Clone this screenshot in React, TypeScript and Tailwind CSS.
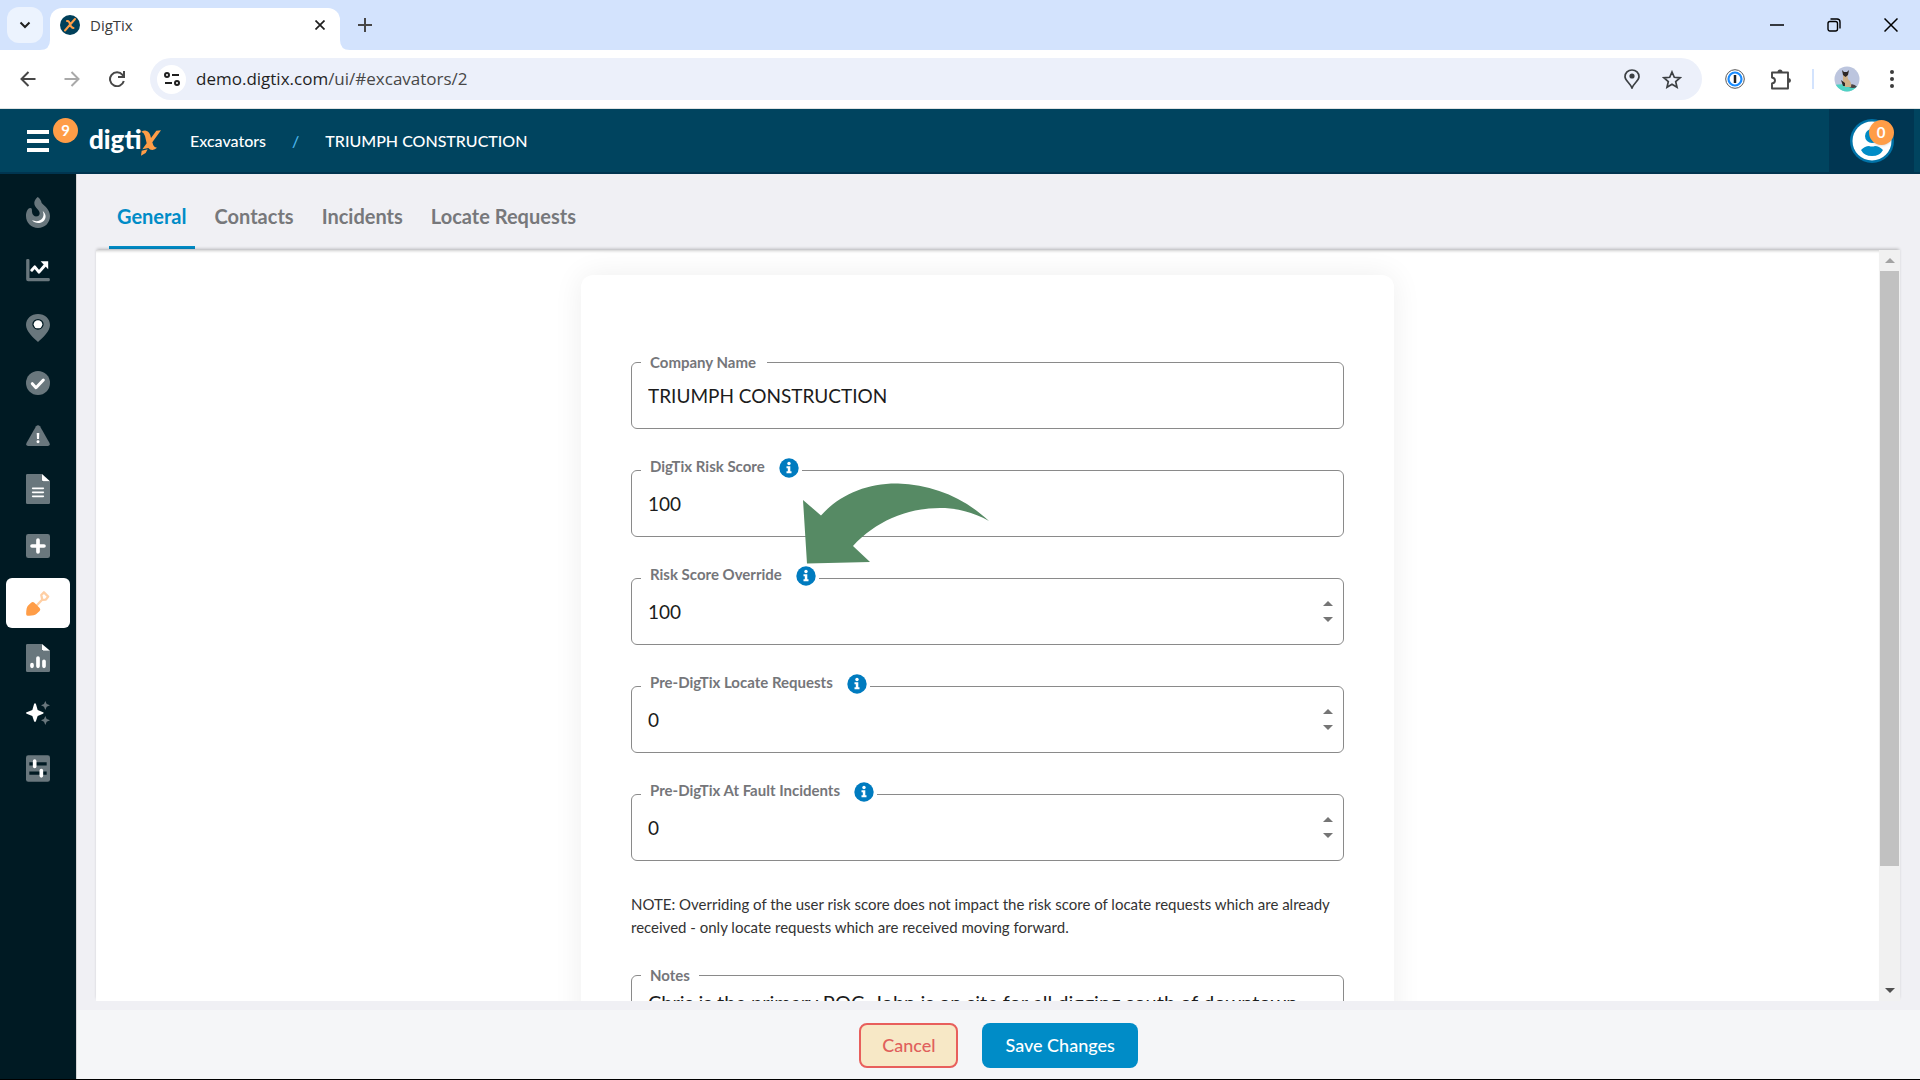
import type { ReactNode } from 'react';

const icons: Record<string, ReactNode> = {
  fire: (
    <svg viewBox="0 0 72 93" className="h-[31px] w-6">
      <path fill="#69777d" d="M35 0C41 4 45 10 47 18C56 27 72 38 72 57C72 78 56 93 36 93C16 93 0 77 0 57C0 46 4 34 13 33C18 33 18 38 18 45C19 55 27 60 34 58C43 55 43 46 36 38C28 30 24 24 25 16C26 9 31 4 35 0Z" />
      <path fill="#fff" d="M50 42C60 50 62 62 54 71C44 81 27 80 18 70C32 75 44 72 50 62C54 55 53 49 50 42Z" />
    </svg>
  ),
  trend: (
    <svg viewBox="0 0 72 70" className="h-[23px] w-6">
      <path fill="#69777d" d="M0 4Q0 0 4 0H6Q10 0 10 4V58H68Q72 58 72 62V64Q72 68 68 68H6Q0 68 0 62Z" />
      <path fill="none" stroke="#fff" strokeWidth="9" strokeLinejoin="round" strokeLinecap="round" d="M17 34L26 24L39 40L58 18" />
      <path fill="#fff" d="M44 7H67V31Z" />
    </svg>
  ),
  pin: (
    <svg viewBox="0 0 72 84" className="h-7 w-6">
      <path fill="#69777d" fillRule="evenodd" d="M36 0C56 0 72 14 72 33C72 51 50 72 36 84C22 72 0 51 0 33C0 14 16 0 36 0ZM36 15A17 16 0 1 0 36 47A17 16 0 1 0 36 15Z" />
      <ellipse cx="36" cy="31" rx="13" ry="12" fill="#fff" />
    </svg>
  ),
  check: (
    <svg viewBox="0 0 72 72" className="size-6">
      <circle cx="36" cy="36" r="36" fill="#69777d" />
      <path fill="none" stroke="#fff" strokeWidth="9" strokeLinecap="round" strokeLinejoin="round" d="M19 38L30 50L52 27" />
    </svg>
  ),
  warning: (
    <svg viewBox="0 0 72 64" className="h-[21px] w-6">
      <path fill="#69777d" d="M30 4Q36 -3 42 4L71 55Q74 63 66 64H6Q-2 63 1 55Z" />
      <path fill="#fff" d="M32 24H40L39 43H33Z" />
      <circle cx="36" cy="51" r="4.500" fill="#fff" />
    </svg>
  ),
  document: (
    <svg viewBox="0 0 72 90" className="h-[30px] w-6">
      <path fill="#69777d" d="M0 4Q0 0 4 0H48V22H72V86Q72 90 68 90H4Q0 90 0 86Z" />
      <path fill="#fff" d="M48 0L72 22H52Q48 22 48 18Z" />
      <path stroke="#fff" strokeWidth="5" strokeLinecap="round" d="M20 43H52M20 55H52M20 67H52" />
    </svg>
  ),
  plus: (
    <svg viewBox="0 0 72 72" className="size-6">
      <rect width="72" height="72" rx="7" fill="#69777d" />
      <path stroke="#fff" strokeWidth="11" strokeLinecap="round" d="M36 18V54M18 36H54" />
    </svg>
  ),
  shovel: (
    <svg viewBox="0 0 72 76" className="h-[25px] w-6">
      <path fill="none" stroke="#ffcfa4" strokeWidth="7" strokeLinejoin="round" strokeLinecap="round" d="M32 44L47 28M46 12L54 4L67 17L60 26L49 27Z" />
      <path fill="#ff9d47" d="M15 36Q20 31 25 36L41 52Q45 57 41 61L31 70Q24 76 4 75Q0 75 0 70Q0 50 6 44Z" />
    </svg>
  ),
  report: (
    <svg viewBox="0 0 72 84" className="h-7 w-6">
      <path fill="#69777d" d="M0 4Q0 0 4 0H48V20H72V80Q72 84 68 84H4Q0 84 0 80Z" />
      <path fill="#fff" d="M48 0L72 20H52Q48 20 48 16Z" />
      <path stroke="#fff" strokeWidth="11" strokeLinecap="round" d="M18 62V67M36 42V67M54 52V67" />
    </svg>
  ),
  sparkles: (
    <svg viewBox="0 0 72 72" className="size-6">
      <path fill="#fff" d="M27 7Q29 7 30 10L35 27L51 34Q55 36 51 38L35 45L30 60Q27 66 24 60L19 45L2 38Q-2 36 2 34L19 27L24 10Q25 7 27 7Z" />
      <path fill="#69777d" d="M58 0L62 9L72 13L62 17L58 27L54 17L45 13L54 9ZM58 45L62 54L72 58L62 62L58 72L54 62L45 58L54 54Z" />
    </svg>
  ),
  sliders: (
    <svg viewBox="0 0 72 80" className="h-[27px] w-6">
      <rect width="72" height="80" rx="7" fill="#69777d" />
      <path stroke="#001a23" strokeWidth="10" d="M10 26H62M10 54H62" />
      <path stroke="#fff" strokeWidth="11" strokeLinecap="round" d="M26 18V34M46 46V62" />
    </svg>
  ),
};

const sideItems = [
  { name: 'Hot Tickets', icon: 'fire', cell: 'h-15' },
  { name: 'Trends', icon: 'trend', cell: 'h-14' },
  { name: 'Locations', icon: 'pin', cell: 'h-15' },
  { name: 'Completed', icon: 'check', cell: 'h-[50px]' },
  { name: 'Alerts', icon: 'warning', cell: 'h-[54px]' },
  { name: 'Documents', icon: 'document', cell: 'h-[54px]' },
  { name: 'Incidents', icon: 'plus', cell: 'h-15' },
  { name: 'Excavators', icon: 'shovel', cell: 'mt-[2px] h-[50px] rounded-md bg-white' },
  { name: 'Reports', icon: 'report', cell: 'h-15' },
  { name: 'Assistant', icon: 'sparkles', cell: 'h-[50px]' },
  { name: 'Settings', icon: 'sliders', cell: 'h-15' },
];

const tabs = ['General', 'Contacts', 'Incidents', 'Locate Requests'];

const fields = [
  { id: 'company', label: 'Company Name', value: 'TRIUMPH CONSTRUCTION', info: false, number: false },
  { id: 'risk', label: 'DigTix Risk Score', value: '100', info: true, number: false },
  { id: 'override', label: 'Risk Score Override', value: '100', info: true, number: true },
  { id: 'locates', label: 'Pre-DigTix Locate Requests', value: '0', info: true, number: true },
  { id: 'faults', label: 'Pre-DigTix At Fault Incidents', value: '0', info: true, number: true },
];

function Browser() {
  return (
    <div className="shrink-0 bg-white font-['Open_Sans',sans-serif]">
      {/* Tab strip */}
      <div className="flex h-[50px] items-center bg-[#d3e3fd] pl-[7px]">
        <button aria-label="Search tabs" className="flex size-9 items-center justify-center rounded-xl bg-[#ecf3fe]">
          <svg viewBox="0 0 12 12" className="size-3" fill="none" stroke="#1f1f1f" strokeWidth="2">
            <path d="M1.500 3.500L6 8L10.500 3.500" />
          </svg>
        </button>
        <div className="relative ml-[7px] mt-2 flex h-[42px] w-[290px] items-center rounded-t-xl bg-white pb-2 pl-[10px] pr-3">
          <svg viewBox="0 0 10 10" className="absolute -left-[10px] bottom-0 size-[10px]"><path fill="#fff" d="M10 0V10H0Q10 10 10 0Z" /></svg>
          <svg viewBox="0 0 10 10" className="absolute -right-[10px] bottom-0 size-[10px]"><path fill="#fff" d="M0 0V10H10Q0 10 0 0Z" /></svg>
          <svg viewBox="0 0 20 20" className="size-5">
            <circle cx="10" cy="10" r="10" fill="#00405a" />
            <path stroke="#ff9d47" strokeWidth="2" strokeLinecap="round" fill="none" d="M5 15.500L15 4M7 6Q9 5.500 10 9Q11 13 13.500 13" />
          </svg>
          <span className="ml-[10px] flex-1 text-[15px] text-[#3c3c3c]">DigTix</span>
          <button aria-label="Close tab" className="flex size-4 items-center justify-center">
            <svg viewBox="0 0 10 10" className="size-[10px]" stroke="#1f1f1f" strokeWidth="1.700"><path d="M.5 .5L9.500 9.500M9.500 .5L.5 9.500" /></svg>
          </button>
        </div>
        <button aria-label="New tab" className="ml-[17px] flex size-4 items-center justify-center">
          <svg viewBox="0 0 14 14" className="size-[14px]" stroke="#474747" strokeWidth="2"><path d="M7 0V14M0 7H14" /></svg>
        </button>
        <div className="ml-auto flex gap-[43px] pr-[22px]">
          <button aria-label="Minimize"><svg viewBox="0 0 14 14" className="size-[14px]" stroke="#000" strokeWidth="1.500"><path d="M0 7H14" /></svg></button>
          <button aria-label="Restore">
            <svg viewBox="0 0 14 14" className="size-[14px]" fill="none" stroke="#000" strokeWidth="1.400">
              <rect x="1" y="3.500" width="9.500" height="9.500" rx="2" />
              <path d="M3.500 1H10Q13 1 13 4V10.500" />
            </svg>
          </button>
          <button aria-label="Close"><svg viewBox="0 0 14 14" className="size-[14px]" stroke="#000" strokeWidth="1.500"><path d="M.5 .5L13.500 13.500M13.500 .5L.5 13.500" /></svg></button>
        </div>
      </div>

      {/* Address bar */}
      <div className="flex h-[59px] items-center border-b border-[#dfe3e3] pl-5 pr-[18px]">
        <button aria-label="Back"><svg viewBox="0 0 16 16" className="size-4" fill="none" stroke="#474747" strokeWidth="2"><path d="M15.500 8H1.500M8.500 1L1.500 8L8.500 15" /></svg></button>
        <button aria-label="Forward" className="ml-7"><svg viewBox="0 0 16 16" className="size-4" fill="none" stroke="#a9a9a9" strokeWidth="2"><path d="M.5 8H14.500M7.500 1L14.500 8L7.500 15" /></svg></button>
        <button aria-label="Reload" className="ml-[29px]">
          <svg viewBox="0 0 16 16" className="size-4" fill="none" stroke="#474747" strokeWidth="2">
            <path d="M14.800 10A7 7 0 1 1 13.500 3.800L15 5.500" />
            <path d="M15 0V6H9" />
          </svg>
        </button>
        <div className="ml-[25px] flex h-[42px] flex-1 items-center rounded-full bg-[#ecf0fa] pl-[7px] pr-5">
          <button aria-label="Site information" className="flex size-[29px] items-center justify-center rounded-full bg-white">
            <svg viewBox="0 0 16 14" className="h-[14px] w-4" fill="none" stroke="#1f1f1f" strokeWidth="2">
              <circle cx="3" cy="3" r="2" />
              <path d="M8 3H15M1 11H8" />
              <circle cx="13" cy="11" r="2" />
            </svg>
          </button>
          <div className="ml-[10px] flex-1 text-[17px] text-[#1f1f1f]">demo.digtix.com<span className="text-[#474747]">/ui/#excavators/2</span></div>
          <button aria-label="Location">
            <svg viewBox="0 0 16 20" className="h-5 w-4" fill="none" stroke="#3c4043" strokeWidth="1.700">
              <path d="M8 1C12 1 15 4 15 7.700C15 11.500 9.800 14 8 19C6.200 14 1 11.500 1 7.700C1 4 4 1 8 1Z" />
              <circle cx="8" cy="7" r="2.600" fill="#3c4043" stroke="none" />
            </svg>
          </button>
          <button aria-label="Bookmark" className="ml-[22px]">
            <svg viewBox="0 0 20 19" className="h-[19px] w-5" fill="none" stroke="#3c4043" strokeWidth="1.700">
              <path d="M10 2L12.300 7.300L18 7.800L13.700 11.600L15 17.200L10 14.200L5 17.200L6.300 11.600L2 7.800L7.700 7.300Z" />
            </svg>
          </button>
        </div>
        <button aria-label="Password manager" className="ml-[23px]">
          <svg viewBox="0 0 20 20" className="size-5" fill="none">
            <circle cx="10" cy="10" r="9.300" fill="#fff" stroke="#555" strokeWidth="1" />
            <circle cx="10" cy="10" r="6.500" stroke="#1a8cff" strokeWidth="2.200" />
            <path stroke="#222" strokeWidth="2.500" d="M10 6V14" />
          </svg>
        </button>
        <button aria-label="Extensions" className="ml-[25px]">
          <svg viewBox="0 0 21 21" className="size-[21px]" fill="none" stroke="#474747" strokeWidth="1.900" strokeLinejoin="round">
            <path d="M2 3.500H18V19.500H2V14.500Q5 14 5 11.500Q5 9 2 8.500Z" />
            <path fill="#474747" stroke="none" d="M7.500 3A2.500 2.500 0 0 1 12.500 3ZM18.500 9A2.500 2.500 0 0 1 18.500 14Z" />
          </svg>
        </button>
        <div className="ml-[21px] h-5 w-[2px] bg-[#d3e3fd]" />
        <button aria-label="Profile" className="ml-5">
          <svg viewBox="0 0 26 26" className="size-[26px]">
            <clipPath id="face"><circle cx="13" cy="13" r="12.500" /></clipPath>
            <g clipPath="url(#face)">
              <rect width="26" height="26" fill="#bcc5de" />
              <path fill="#4fd3c4" d="M0 19Q12 17 26 21V26H0Z" />
              <path fill="#4c4446" d="M15 19Q20 17 23 21Q19 23 15 21Z" />
              <path fill="#cfb088" d="M9 8L13 8L14 13Q18 16 17 21H11L9 15Z" />
              <path fill="#2e2725" d="M8 4L10 6H13L15 4L14 9L11.500 11L9 9ZM7 14L11 17V20L9 20Z" />
            </g>
          </svg>
        </button>
        <button aria-label="Menu" className="ml-[22px] flex w-5 justify-center">
          <svg viewBox="0 0 4 18" className="h-[18px] w-1" fill="#3c3c3c"><circle cx="2" cy="2" r="2" /><circle cx="2" cy="9" r="2" /><circle cx="2" cy="16" r="2" /></svg>
        </button>
      </div>
    </div>
  );
}

function Header() {
  return (
    <header className="flex h-[65px] shrink-0 items-center border-b-2 border-[#003550] bg-[#00445f] pl-[27px] pr-[6px] text-white">
      <button aria-label="Open menu" className="relative">
        <svg viewBox="0 0 22 22" className="size-[22px]" fill="#fff"><path d="M0 0H22V4H0ZM0 9H22V13H0ZM0 18H22V22H0Z" /></svg>
        <span className="absolute -top-3 left-[26px] flex size-[25px] items-center justify-center rounded-full bg-[#ff9d47] text-[15px] font-bold">9</span>
      </button>
      <a href="#home" aria-label="digtix" className="ml-10 flex w-[74px] items-center pb-1 text-[26px] leading-8 font-black">
        <span>digti</span>
        <svg viewBox="0 0 60 78" className="mt-2 h-[26px] w-5 shrink-0">
          <path fill="#ff9d47" d="M60 1L46 2L30 24Q27 4 15 2Q8 1 1 5Q9 8 12 18L17 40L4 58L22 54Q26 60 34 60Q42 59 48 53Q40 53 37 46L34 37ZM2 62L20 58L14 69L0 77Z" />
        </svg>
      </a>
      <nav className="ml-[27px] flex items-center gap-[26px] text-base font-medium">
        <a href="#excavators">Excavators</a>
        <span className="text-[#4db8ee]">/</span>
        <a href="#excavators/2">TRIUMPH CONSTRUCTION</a>
      </nav>
      <button aria-label="Account" className="ml-auto flex h-full w-[85px] items-center justify-center bg-[#003652]">
        <span className="relative">
          <svg viewBox="0 0 44 44" className="size-11">
            <circle cx="22" cy="22" r="22" fill="#0073a8" />
            <circle cx="22" cy="22" r="19.500" fill="#fff" />
            <circle cx="22" cy="17" r="7" fill="#008cc7" />
            <path fill="#008cc7" d="M11 31Q15 27 19 27Q22 28 25 27Q29 27 33 31Q30 37 22 37Q14 37 11 31Z" />
          </svg>
          <span className="absolute top-[1px] right-0 flex size-[25px] items-center justify-center rounded-full bg-[#ff9d47] text-[15px] font-bold shadow">0</span>
        </span>
      </button>
    </header>
  );
}

function InfoIcon() {
  return (
    <svg viewBox="0 0 20 20" className="size-5">
      <circle cx="10" cy="10" r="9.700" fill="#007bbf" />
      <circle cx="10" cy="5.500" r="1.700" fill="#fff" />
      <path fill="#fff" d="M7.500 8.300H11.300V13.300H12.500V15.200H7.500V13.300H8.800V10.200H7.500Z" />
    </svg>
  );
}

export default function App() {
  return (
    <div className="flex h-screen flex-col overflow-hidden border-b border-black bg-[#f0f0f4] font-['Lato',sans-serif]">
      <Browser />
      <Header />

      <div className="flex min-h-0 flex-1">
        <aside className="w-[77px] shrink-0 border-r border-[#d5d5d5] bg-[#001a23]">
          <nav className="flex flex-col px-[6px] pt-2">
            {sideItems.map((item) => (
              <a key={item.name} href="#" aria-label={item.name} className={`flex items-center justify-center ${item.cell}`}>
                {icons[item.icon]}
              </a>
            ))}
          </nav>
        </aside>

        <main className="flex min-w-0 flex-1 flex-col">
          {/* Section tabs */}
          <nav className="mr-5 ml-[19px] flex h-[76px] shrink-0 gap-3 px-[13px] pb-[1px]">
            {tabs.map((tab, i) => (
              <a
                key={tab}
                href="#"
                className={`flex items-center border-b-[3px] px-2 pt-3 text-[20px] font-bold ${i === 0 ? 'border-[#008cc7] text-[#008cc7]' : 'border-transparent text-[#77787b]'}`}
              >
                {tab}
              </a>
            ))}
          </nav>

          <div className="mr-5 ml-[19px] flex min-h-0 flex-1 bg-white shadow-[0_-2px_3px_-1px_rgba(0,0,0,0.25)]">
            <div className="flex-1 overflow-hidden pt-[25px] shadow-[inset_0_3px_3px_-2px_rgba(0,0,0,0.2)]">
              <form className="relative mx-auto w-full max-w-[813px] rounded-xl bg-white px-[50px] pt-[87px] pb-12 shadow-[0_0_30px_rgba(0,0,0,0.07)]">
                <div className="flex flex-col gap-[41px]">
                  {fields.map((f) => (
                    <div key={f.id} className="relative">
                      <input
                        id={f.id}
                        type={f.number ? 'number' : 'text'}
                        defaultValue={f.value}
                        className="block h-[67px] w-full appearance-none rounded-md border border-[#8a8a8a] px-4 text-[19px] text-[#1c1c1c] [appearance:textfield] [&::-webkit-inner-spin-button]:appearance-none"
                      />
                      <div className={`absolute left-[10px] flex h-5 items-center gap-[14px] bg-white pl-[9px] ${f.info ? '-top-3 pr-[3px]' : '-top-[10px] pr-[11px]'}`}>
                        <label htmlFor={f.id} className={`text-[15px] leading-5 font-bold text-[#75767a] ${f.info ? 'pb-1' : ''}`}>{f.label}</label>
                        {f.info && <InfoIcon />}
                      </div>
                      {f.number && (
                        <div className="absolute top-[23px] right-[11px] flex flex-col gap-[11px]">
                          <button type="button" aria-label="Increase"><svg viewBox="0 0 10 5" className="h-[5px] w-[10px]" fill="#757575"><path d="M0 5L5 0L10 5Z" /></svg></button>
                          <button type="button" aria-label="Decrease"><svg viewBox="0 0 10 5" className="h-[5px] w-[10px]" fill="#757575"><path d="M0 0L5 5L10 0Z" /></svg></button>
                        </div>
                      )}
                    </div>
                  ))}
                </div>

                <p className="mt-8 text-[15px] leading-[23px] text-[#333]">
                  NOTE: Overriding of the user risk score does not impact the risk score of locate requests which are already received - only locate requests which are received moving forward.
                </p>

                <div className="relative mt-9">
                  <textarea
                    id="notes"
                    defaultValue="Chris is the primary POC. John is on site for all digging south of downtown"
                    className="block h-[120px] w-full resize-none rounded-md border border-[#8a8a8a] px-4 py-3 text-[20px] leading-7 text-[#1c1c1c]"
                  />
                  <label htmlFor="notes" className="absolute -top-[10px] left-[10px] bg-white px-[9px] text-[15px] leading-5 font-bold text-[#75767a]">Notes</label>
                </div>

                {/* Pointer to the override help icon */}
                <svg viewBox="0 0 190 84" className="pointer-events-none absolute top-[207px] left-[220px] h-[84px] w-[190px]">
                  <path fill="#568a64" d="M2 18L20 33.500C38 13 66 1 97 1.500C132 3 162 15 188 39C172 30 156 26 139 26C105 26 74 40 52 64L69 80L6 81.500Z" />
                </svg>
              </form>
            </div>

            {/* Scrollbar */}
            <div className="flex w-[21px] shrink-0 flex-col items-center bg-[#f1f1f1] px-[1px] py-2">
              <svg viewBox="0 0 10 5" className="h-[5px] w-[10px]" fill="#a3a3a3"><path d="M0 5L5 0L10 5Z" /></svg>
              <div className="mt-2 mb-[122px] w-full flex-1 bg-[#c1c1c1]" />
              <svg viewBox="0 0 10 5" className="h-[5px] w-[10px]" fill="#505050"><path d="M0 0L5 5L10 0Z" /></svg>
            </div>
          </div>

          <footer className="mt-[9px] flex h-[69px] shrink-0 items-center justify-center gap-6 bg-[#f5f6f8] pt-[2px] text-lg">
            <button className="h-[45px] rounded-lg border-2 border-[#e85f5c] bg-[#f7e8c6] px-[21px] pb-[2px] font-medium text-[#e0605c]">Cancel</button>
            <button className="h-[45px] rounded-lg bg-[#008cc7] px-[23px] pb-[2px] font-medium text-white">Save Changes</button>
          </footer>
        </main>
      </div>
    </div>
  );
}
